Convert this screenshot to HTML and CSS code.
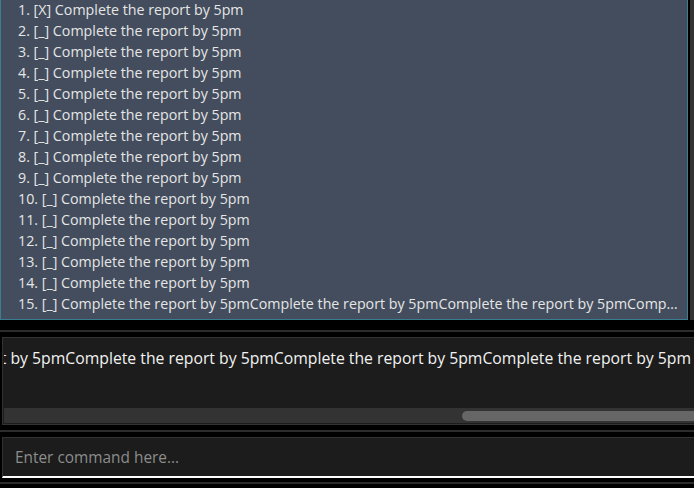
FILE: index.html
```html
<!DOCTYPE html>
<html>
<head>
<meta charset="utf-8">
<link rel="stylesheet" href="styles.css">
</head>
<body>
<div class="app">
  <div class="list-wrap">
    <ul class="task-list">
      <li class="task">1. [X] Complete the report by 5pm</li>
      <li class="task">2. [_] Complete the report by 5pm</li>
      <li class="task">3. [_] Complete the report by 5pm</li>
      <li class="task">4. [_] Complete the report by 5pm</li>
      <li class="task">5. [_] Complete the report by 5pm</li>
      <li class="task">6. [_] Complete the report by 5pm</li>
      <li class="task">7. [_] Complete the report by 5pm</li>
      <li class="task">8. [_] Complete the report by 5pm</li>
      <li class="task">9. [_] Complete the report by 5pm</li>
      <li class="task">10. [_] Complete the report by 5pm</li>
      <li class="task">11. [_] Complete the report by 5pm</li>
      <li class="task">12. [_] Complete the report by 5pm</li>
      <li class="task">13. [_] Complete the report by 5pm</li>
      <li class="task">14. [_] Complete the report by 5pm</li>
      <li class="task">15. [_] Complete the report by 5pmComplete the report by 5pmComplete the report by 5pmComplete the report by 5pm</li>
    </ul>
    <div class="vscroll"></div>
  </div>
  <div class="sep"></div>
  <div class="result-box">
    <div class="result-text"><span>t by 5pmComplete the report by 5pmComplete the report by 5pmComplete the report by 5pm</span></div>
    <div class="hscroll"><div class="hthumb"></div></div>
  </div>
  <div class="sep sep-b"></div>
  <div class="command-box">
    <span class="placeholder">Enter command here...</span>
  </div>
  <div class="sep sep-c"></div>
</div>
</body>
</html>
```

FILE: styles.css
```css
html, body {
  margin: 0;
  padding: 0;
  background: #000;
}
.app {
  width: 694px;
  height: 488px;
  overflow: hidden;
  display: flex;
  flex-direction: column;
  font-family: "Open Sans", "Noto Sans", sans-serif;
}
.list-wrap {
  display: flex;
  height: 320px;
}
.task-list {
  list-style: none;
  margin: 0;
  padding: 0 0 3px 0;
  width: 688px;
  background: #434d5d;
  border: 1px solid #3a7f90;
  border-top: none;
  box-sizing: border-box;
}
.task {
  height: 21px;
  line-height: 20px;
  padding: 0 9px 0 17px;
  color: #e6e6e6;
  font-size: 14.25px;
  white-space: nowrap;
  overflow: hidden;
  text-overflow: ellipsis;
}
.vscroll {
  flex: 1;
  background: #333;
  margin-left: 2px;
}
.sep {
  height: 2px;
  background: #2c2c2c;
  margin-top: 10px;
}
.result-box {
  margin: 5px 0 0 2px;
  height: 88px;
  border: 1px solid #333;
  border-right: none;
  background: #1c1c1c;
  box-sizing: border-box;
  display: flex;
  flex-direction: column;
  padding: 1px 0 0 1px;
}
.result-text {
  height: 37px;
  display: flex;
  justify-content: flex-end;
  align-items: center;
  overflow: hidden;
  white-space: nowrap;
  color: #f2f2f2;
  font-size: 15.75px;
  padding-right: 3px;
}
.result-text span {
  flex: none;
}
.hscroll {
  margin-top: auto;
  margin-bottom: 1px;
  height: 15px;
  background: #333;
  display: flex;
  align-items: center;
  justify-content: flex-end;
}
.hthumb {
  width: 232px;
  height: 10px;
  background: #666;
  border-radius: 5px 0 0 5px;
}
.sep-b {
  margin-top: 5px;
}
.command-box {
  margin: 5px 0 0 2px;
  height: 41px;
  border: 1px solid #333;
  border-right: none;
  border-bottom: 2px solid #fff;
  background: #1c1c1c;
  box-sizing: border-box;
  display: flex;
  align-items: center;
  padding-left: 12px;
}
.placeholder {
  color: #8c8c8c;
  font-size: 15.4px;
}
.sep-c {
  margin-top: 4px;
}
```
